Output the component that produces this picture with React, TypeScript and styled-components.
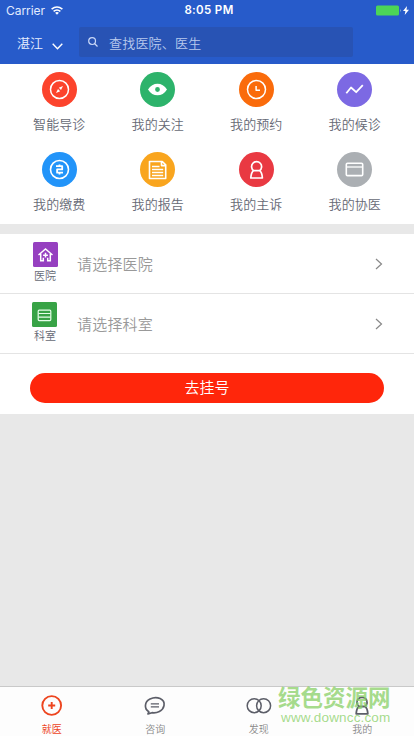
import React from 'react';
import styled, { createGlobalStyle } from 'styled-components';

const GlobalStyle = createGlobalStyle`
  * { box-sizing: border-box; }
  body { margin: 0; background: #e8e8e8; }
  button { border: 0; padding: 0; background: none; font: inherit; }
`;

const Screen = styled.div`
  width: 414px;
  height: 736px;
  display: flex;
  flex-direction: column;
  overflow: hidden;
  background: #e8e8e8;
  color: #666975;
  font-family: Inter, "Noto Sans CJK SC", sans-serif;
  font-weight: 350;
  white-space: nowrap;
`;

const Header = styled.header`
  height: 64px;
  flex: none;
  background: #275bca;
  color: #fff;
`;

const StatusBar = styled.div`
  height: 20px;
  padding: 1px 4px 0 6px;
  display: grid;
  grid-template-columns: 1fr auto 1fr;
  align-items: center;
  font-size: 12px;
  line-height: 19px;
`;

const Carrier = styled.div`
  display: flex;
  align-items: center;
  gap: 6px;
  color: #e2ebff;
  font-weight: 400;
  letter-spacing: -0.05px;
`;

const Clock = styled.div`
  padding-left: 2px;
  font-weight: 600;
  font-size: 11.5px;
  letter-spacing: 0.35px;
`;

const Power = styled.div`
  display: flex;
  justify-content: flex-end;
`;

const NavBar = styled.div`
  height: 44px;
  padding: 7px 61px 0 17px;
  display: flex;
`;

const City = styled.button`
  width: 62px;
  height: 31px;
  display: flex;
  align-items: center;
  gap: 9px;
  color: #e8efff;
  font-size: 13px;
  svg { margin-top: 7px; }
`;

const Search = styled.div`
  flex: 1;
  height: 30px;
  padding-left: 9px;
  display: flex;
  align-items: center;
  gap: 11px;
  border-radius: 2px;
  background: #2853b4;
  color: #b9caed;
  font-size: 13px;
  letter-spacing: 0.2px;
`;

const Shortcuts = styled.section`
  height: 160px;
  flex: none;
  padding: 0 10px;
  display: grid;
  grid-template-columns: repeat(4, 1fr);
  grid-template-rows: 80px 80px;
  background: #fff;
`;

const Shortcut = styled.div`
  padding-top: 8px;
  display: flex;
  flex-direction: column;
  align-items: center;
  gap: 7px;
  font-size: 13px;
  line-height: 20px;
  letter-spacing: 0.1px;
`;

const Disc = styled.div<{ $color: string }>`
  width: 35px;
  height: 35px;
  border-radius: 50%;
  background: ${(p) => p.$color};
  svg { display: block; }
`;

const Booking = styled.section`
  height: 180px;
  flex: none;
  margin-top: 10px;
  background: #fff;
`;

const Picker = styled.div`
  height: 60px;
  padding: 0 31px 0 30px;
  display: flex;
  align-items: center;
  border-bottom: 1px solid #e4e4e4;
`;

const PickerTag = styled.div<{ $shift: number }>`
  width: 30px;
  height: 100%;
  padding-top: 8px;
  display: flex;
  flex-direction: column;
  align-items: center;
  font-size: 11px;
  line-height: 19px;
  svg {
    flex: none;
    margin-left: ${(p) => p.$shift}px;
  }
`;

const PickerText = styled.div`
  flex: 1;
  padding-left: 17px;
  color: #999;
  font-size: 15px;
  letter-spacing: 0.2px;
`;

const Submit = styled.button`
  width: 354px;
  height: 30px;
  margin: 19px 30px 0;
  display: block;
  border-radius: 15px;
  background: #ff260b;
  color: #fff;
  font-size: 15px;
  line-height: 30px;
`;

const TabBar = styled.nav`
  position: relative;
  height: 50px;
  flex: none;
  margin-top: auto;
  display: grid;
  grid-template-columns: repeat(4, 1fr);
  border-top: 1px solid #c9c9c9;
  background: #fdfdfd;
`;

const Tab = styled.div<{ $active?: boolean }>`
  padding-top: 6px;
  display: flex;
  flex-direction: column;
  align-items: center;
  gap: 4px;
  color: ${(p) => (p.$active ? '#ed451f' : '#898989')};
  font-size: 10px;
  font-weight: ${(p) => (p.$active ? 400 : 350)};
  line-height: 14px;
`;

const Watermark = styled.div`
  position: absolute;
  left: 278px;
  top: -5px;
  display: flex;
  flex-direction: column;
  color: rgba(137, 208, 103, 0.76);
  pointer-events: none;
`;

const WatermarkName = styled.span`
  font: 700 22.5px/28px "Noto Sans CJK SC", sans-serif;
`;

const WatermarkUrl = styled.span`
  margin: -1px 0 0 3px;
  font: 400 13.5px/18px "Liberation Sans", sans-serif;
  letter-spacing: 0.15px;
`;

const shortcuts = [
  { label: '智能导诊', color: '#fc432c', art: <><circle cx="17.5" cy="17.5" r="9" strokeWidth="1.5" /><path d="m21 14-4.2 1.8 2.2 2.1Zm-7 7 4.2-1.8-2.2-2.1Z" fill="#fff" stroke="none" /></> },
  { label: '我的关注', color: '#2db36b', art: <path d="M8 17.5C12.5 9.7 22.5 9.7 27 17.5 22.5 25.3 12.5 25.3 8 17.5Zm9.5-2.4a2.4 2.4 0 1 0 0 4.8 2.4 2.4 0 0 0 0-4.8Z" fill="#fff" fillRule="evenodd" stroke="none" /> },
  { label: '我的预约', color: '#fa6b0b', art: <><circle cx="17.5" cy="17.5" r="9" strokeWidth="1.5" /><path d="M17.1 14v4.3H21" strokeWidth="1.5" /></> },
  { label: '我的候诊', color: '#7c69e3', art: <path d="m9.3 21.3 4.7-5.8 5.2 4.7 6.6-7" strokeWidth="1.8" /> },
  { label: '我的缴费', color: '#2294f9', art: <><circle cx="17.5" cy="17.5" r="9" strokeWidth="1.6" /><path d="M14 14.2h6.2v3.2h-5.1v3.3H21M17.5 12.4v1.8m0 6.5v1.8" strokeWidth="1.8" /></> },
  { label: '我的报告', color: '#f9a51e', art: <><path d="M9.5 9.5h12.8l3.4 3.4v13.6H9.5ZM21.5 9.8v3.8h4" strokeWidth="1.6" /><path d="M12 14.5h7.5M12 17.5h11.2M12 20.5h11.2M12 23.5h11.2" strokeWidth="1.4" /></> },
  { label: '我的主诉', color: '#e93942', art: <path d="M14.6 18.6a5 5 0 1 1 6 0c1.7 1.3 2.6 3.8 2.8 7.4H11.8c.2-3.6 1.1-6.1 2.8-7.4Zm0 0h6" strokeWidth="1.7" /> },
  { label: '我的协医', color: '#abafb3', art: <><rect x="9.3" y="11.2" width="16.4" height="12.4" rx="1.2" strokeWidth="1.6" /><path d="M9.5 15h16" strokeWidth="1.3" /></> },
];

const Chevron = () => (
  <svg width="8" height="12" viewBox="0 0 8 12" fill="none" stroke="#888" strokeWidth="1.2"><path d="m1 1 5.5 5L1 11" /></svg>
);

const tabs = [
  { label: '就医', art: <><circle cx="13.7" cy="12.5" r="9.4" stroke="#ed451f" strokeWidth="1.9" /><path d="M13.7 9v7m-3.5-3.5h7" stroke="#ed451f" strokeWidth="1.9" /></> },
  { label: '咨询', art: <><path d="M7.8 18.7C2.8 15.7 3.5 8.7 9 6c7-3.6 15.3.2 14 6.7-1.1 5.5-7.2 7.7-12 7l-4 1.2Z" strokeWidth="1.7" /><path d="M9.8 10.8H18m-8.2 3H18" strokeWidth="1.2" /></> },
  { label: '发现', art: <><circle cx="9.2" cy="12.7" r="7" strokeWidth="1.5" /><circle cx="18.6" cy="12.7" r="7" strokeWidth="1.5" /></> },
  { label: '我的', art: <path d="M11 13.5a5.1 5.1 0 1 1 6 0c1.7 1.1 2.6 3.5 2.8 7.3H8.2c.2-3.8 1.1-6.2 2.8-7.3Zm0 0h6" strokeWidth="1.8" /> },
];

export default function App() {
  return (
    <>
      <GlobalStyle />
      <Screen>
        <Header>
          <StatusBar>
            <Carrier>
              Carrier
              <svg width="12" height="9" viewBox="0 0 12 9" fill="none" stroke="#fff" strokeWidth="1.6"><path d="M.6 3.2q5.4-4.4 10.8 0M2.6 5.3q3.4-2.7 6.8 0" /><path d="M4.1 6.7q1.9-1.5 3.8 0L6 8.8Z" fill="#fff" stroke="none" /></svg>
            </Carrier>
            <Clock>8:05 PM</Clock>
            <Power>
              <svg width="34" height="11" viewBox="0 0 34 11"><rect width="23" height="10" y=".5" rx="1.5" fill="#4cd557" /><path d="M24 4q1.3 1.5 0 3Z" fill="#aee2cc" /><path d="m31 1-4 5h2.4l-.7 4L33 4.8h-2.5Z" fill="#fff" /></svg>
            </Power>
          </StatusBar>
          <NavBar>
            <City>
              湛江
              <svg width="11" height="7" viewBox="0 0 11 7" fill="none" stroke="#fff" strokeWidth="1.4"><path d="m.7.7 4.8 5 4.8-5" /></svg>
            </City>
            <Search>
              <svg width="10" height="10" viewBox="0 0 10 10" fill="none" stroke="#c9d8f8" strokeWidth="1.2"><circle cx="4.1" cy="4.1" r="3.4" /><path d="m6.5 6.5 3 3" /></svg>
              查找医院、医生
            </Search>
          </NavBar>
        </Header>
        <Shortcuts>
          {shortcuts.map((s) => (
            <Shortcut key={s.label}>
              <Disc $color={s.color}>
                <svg width="35" height="35" viewBox="0 0 35 35" fill="none" stroke="#fff" strokeLinejoin="round">{s.art}</svg>
              </Disc>
              {s.label}
            </Shortcut>
          ))}
        </Shortcuts>
        <Booking>
          <Picker>
            <PickerTag $shift={1}>
              <svg width="25" height="25" viewBox="0 0 25 25" fill="none" stroke="#fff" strokeWidth="1.5"><rect width="25" height="25" rx="1.5" fill="#9640c0" stroke="none" /><path d="m5.5 13 7-6 7 6M7.7 11.7v7h2.6v-3m7-4v7h-2.6v-3M12.5 10.8v4.8m-2.4-2.4h4.8" /></svg>
              医院
            </PickerTag>
            <PickerText>请选择医院</PickerText>
            <Chevron />
          </Picker>
          <Picker>
            <PickerTag $shift={-1}>
              <svg width="25" height="25" viewBox="0 0 25 25" fill="none" stroke="#e6ffe9" strokeWidth="1.2"><rect width="25" height="25" rx="1.5" fill="#38a346" stroke="none" /><rect x="6.2" y="8.2" width="12.6" height="10.4" rx="1" /><path d="M6.5 11.5h12m-12 3.7h12" /></svg>
              科室
            </PickerTag>
            <PickerText>请选择科室</PickerText>
            <Chevron />
          </Picker>
          <Submit>去挂号</Submit>
        </Booking>
        <TabBar>
          {tabs.map((t, i) => (
            <Tab key={t.label} $active={i === 0}>
              <svg width="28" height="25" viewBox="0 0 28 25" fill="none" stroke="#5c5e68" strokeLinejoin="round">{t.art}</svg>
              {t.label}
            </Tab>
          ))}
          <Watermark>
            <WatermarkName>绿色资源网</WatermarkName>
            <WatermarkUrl>www.downcc.com</WatermarkUrl>
          </Watermark>
        </TabBar>
      </Screen>
    </>
  );
}
